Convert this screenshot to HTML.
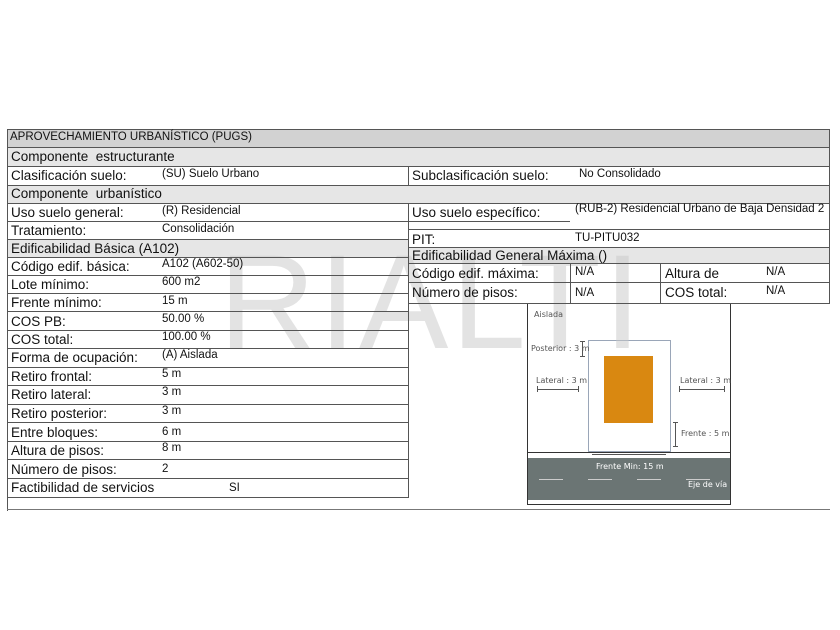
<!DOCTYPE html>
<html><head><meta charset="utf-8"><style>
body{margin:0;width:840px;height:630px;background:#fff;position:relative;overflow:hidden;font-family:"Liberation Sans",Arial,sans-serif;color:#111}
.a{position:absolute}
.t{position:absolute;font-size:13.5px;white-space:nowrap;line-height:1}
.s{position:absolute;font-size:11.5px;white-space:nowrap;line-height:1}
.h{position:absolute;height:1px;background:#555}
.v{position:absolute;width:1px;background:#555}
.d{position:absolute;font-family:"DejaVu Sans",sans-serif;font-size:8px;color:#555;white-space:nowrap;line-height:1}
</style></head><body>

<!-- gray bands -->
<div class="a" style="left:7px;top:129px;width:823px;height:18px;background:#d2d2d2"></div>
<div class="a" style="left:7px;top:147px;width:823px;height:19px;background:#e6e6e6"></div>
<div class="a" style="left:7px;top:185px;width:823px;height:18px;background:#e6e6e6"></div>
<div class="a" style="left:7px;top:239px;width:401px;height:18px;background:#e6e6e6"></div>
<div class="a" style="left:408px;top:247px;width:422px;height:16px;background:#e6e6e6"></div>

<!-- diagram -->
<div class="a" style="left:527px;top:303px;width:202px;height:201px;border:1px solid #333;border-top:none"></div>
<div class="a" style="left:528px;top:458px;width:202px;height:42px;background:#6b7574"></div>
<div class="h" style="left:528px;top:452px;width:202px;background:#333"></div>
<div class="a" style="left:588px;top:340px;width:81px;height:110px;border:1px solid #9aa6b8"></div>
<div class="a" style="left:604px;top:356px;width:49px;height:67px;background:#d98811"></div>

<div class="a" style="left:219px;top:236px;font-size:134px;letter-spacing:3px;color:rgba(200,200,200,0.5);line-height:1;">RIALTI</div>

<div class="d" style="left:534px;top:311px">Aislada</div>
<div class="d" style="left:531px;top:345px">Posterior : 3 m</div>
<div class="v" style="left:582px;top:341px;height:15px;background:#555"></div>
<div class="h" style="left:580px;top:341px;width:5px"></div>
<div class="h" style="left:580px;top:356px;width:5px"></div>
<div class="d" style="left:536px;top:377px">Lateral : 3 m</div>
<div class="h" style="left:537px;top:389px;width:42px"></div>
<div class="v" style="left:537px;top:386px;height:6px"></div>
<div class="v" style="left:578px;top:386px;height:6px"></div>
<div class="d" style="left:680px;top:377px">Lateral : 3 m</div>
<div class="h" style="left:679px;top:389px;width:46px"></div>
<div class="v" style="left:679px;top:386px;height:6px"></div>
<div class="v" style="left:724px;top:386px;height:6px"></div>
<div class="v" style="left:675px;top:422px;height:25px"></div>
<div class="h" style="left:673px;top:422px;width:5px"></div>
<div class="h" style="left:673px;top:446px;width:5px"></div>
<div class="d" style="left:681px;top:430px">Frente : 5 m</div>
<div class="h" style="left:592px;top:454px;width:74px"></div>
<div class="d" style="left:596px;top:463px;color:#fff">Frente Min: 15 m</div>
<div class="h" style="left:539px;top:479px;width:24px;background:#ccc"></div>
<div class="h" style="left:588px;top:479px;width:24px;background:#ccc"></div>
<div class="h" style="left:637px;top:479px;width:24px;background:#ccc"></div>
<div class="h" style="left:686px;top:479px;width:24px;background:#ccc"></div>
<div class="d" style="left:688px;top:481px;color:#fff">Eje de vía</div>

<!-- outer lines -->
<div class="h" style="left:7px;top:129px;width:823px"></div>
<div class="v" style="left:7px;top:129px;height:382px"></div>
<div class="v" style="left:829px;top:129px;height:175px"></div>
<div class="h" style="left:7px;top:509px;width:823px;background:#777"></div>
<div class="h" style="left:7px;top:147px;width:823px"></div>
<div class="h" style="left:7px;top:166px;width:823px"></div>
<div class="h" style="left:7px;top:185px;width:823px"></div>
<div class="h" style="left:7px;top:203px;width:823px"></div>
<div class="v" style="left:408px;top:166px;height:19px"></div>
<div class="v" style="left:408px;top:203px;height:295px"></div>

<!-- left rows -->
<div class="h" style="left:7px;top:221px;width:401px"></div>
<div class="h" style="left:7px;top:239px;width:401px"></div>
<div class="h" style="left:7px;top:257px;width:401px"></div>
<div class="h" style="left:7px;top:275px;width:401px"></div>
<div class="h" style="left:7px;top:293px;width:401px"></div>
<div class="h" style="left:7px;top:311px;width:401px"></div>
<div class="h" style="left:7px;top:330px;width:401px"></div>
<div class="h" style="left:7px;top:348px;width:401px"></div>
<div class="h" style="left:7px;top:367px;width:401px"></div>
<div class="h" style="left:7px;top:385px;width:401px"></div>
<div class="h" style="left:7px;top:404px;width:401px"></div>
<div class="h" style="left:7px;top:422px;width:401px"></div>
<div class="h" style="left:7px;top:441px;width:401px"></div>
<div class="h" style="left:7px;top:459px;width:401px"></div>
<div class="h" style="left:7px;top:478px;width:401px"></div>
<div class="h" style="left:7px;top:497px;width:401px"></div>

<div class="s" style="left:10px;top:132px">APROVECHAMIENTO URBANÍSTICO (PUGS)</div>
<div class="t" style="left:11px;top:150px">Componente&nbsp; estructurante</div>
<div class="t" style="left:11px;top:169px">Clasificación suelo:</div><div class="s" style="left:162px;top:169px">(SU) Suelo Urbano</div>
<div class="t" style="left:11px;top:187px">Componente&nbsp; urbanístico</div>
<div class="t" style="left:11px;top:206px">Uso suelo general:</div><div class="s" style="left:162px;top:206px">(R) Residencial</div>
<div class="t" style="left:11px;top:224px">Tratamiento:</div><div class="s" style="left:162px;top:224px">Consolidación</div>
<div class="t" style="left:11px;top:242px">Edificabilidad Básica (A102)</div>
<div class="t" style="left:11px;top:260px">Código edif. básica:</div><div class="s" style="left:162px;top:259px">A102 (A602-50)</div>
<div class="t" style="left:11px;top:278px">Lote mínimo:</div><div class="s" style="left:162px;top:277px">600 m2</div>
<div class="t" style="left:11px;top:296px">Frente mínimo:</div><div class="s" style="left:162px;top:296px">15 m</div>
<div class="t" style="left:11px;top:315px">COS PB:</div><div class="s" style="left:162px;top:314px">50.00 %</div>
<div class="t" style="left:11px;top:333px">COS total:</div><div class="s" style="left:162px;top:332px">100.00 %</div>
<div class="t" style="left:11px;top:351px">Forma de ocupación:</div><div class="s" style="left:162px;top:350px">(A) Aislada</div>
<div class="t" style="left:11px;top:370px">Retiro frontal:</div><div class="s" style="left:162px;top:369px">5 m</div>
<div class="t" style="left:11px;top:388px">Retiro lateral:</div><div class="s" style="left:162px;top:387px">3 m</div>
<div class="t" style="left:11px;top:407px">Retiro posterior:</div><div class="s" style="left:162px;top:406px">3 m</div>
<div class="t" style="left:11px;top:426px">Entre bloques:</div><div class="s" style="left:162px;top:427px">6 m</div>
<div class="t" style="left:11px;top:444px">Altura de pisos:</div><div class="s" style="left:162px;top:443px">8 m</div>
<div class="t" style="left:11px;top:463px">Número de pisos:</div><div class="s" style="left:162px;top:464px">2</div>
<div class="t" style="left:11px;top:481px">Factibilidad de servicios</div><div class="s" style="left:229px;top:483px">SI</div>

<!-- right -->
<div class="t" style="left:412px;top:169px">Subclasificación suelo:</div><div class="s" style="left:579px;top:169px">No Consolidado</div>
<div class="t" style="left:412px;top:206px">Uso suelo específico:</div><div class="s" style="left:575px;top:204px">(RUB-2) Residencial Urbano de Baja Densidad 2</div>
<div class="h" style="left:408px;top:221px;width:162px"></div>
<div class="h" style="left:408px;top:229px;width:422px"></div>
<div class="t" style="left:412px;top:233px">PIT:</div><div class="s" style="left:575px;top:233px">TU-PITU032</div>
<div class="h" style="left:408px;top:247px;width:422px"></div>
<div class="t" style="left:412px;top:249px">Edificabilidad General Máxima ()</div>
<div class="h" style="left:408px;top:263px;width:422px"></div>
<div class="t" style="left:412px;top:267px">Código edif. máxima:</div><div class="s" style="left:575px;top:267px">N/A</div>
<div class="t" style="left:665px;top:267px">Altura de</div><div class="s" style="left:766px;top:267px">N/A</div>
<div class="h" style="left:408px;top:282px;width:422px"></div>
<div class="t" style="left:412px;top:286px">Número de pisos:</div><div class="s" style="left:575px;top:288px">N/A</div>
<div class="t" style="left:665px;top:286px">COS total:</div><div class="s" style="left:766px;top:286px">N/A</div>
<div class="h" style="left:408px;top:303px;width:422px"></div>
<div class="v" style="left:570px;top:263px;height:40px"></div>
<div class="v" style="left:660px;top:263px;height:40px"></div>
</body></html>
